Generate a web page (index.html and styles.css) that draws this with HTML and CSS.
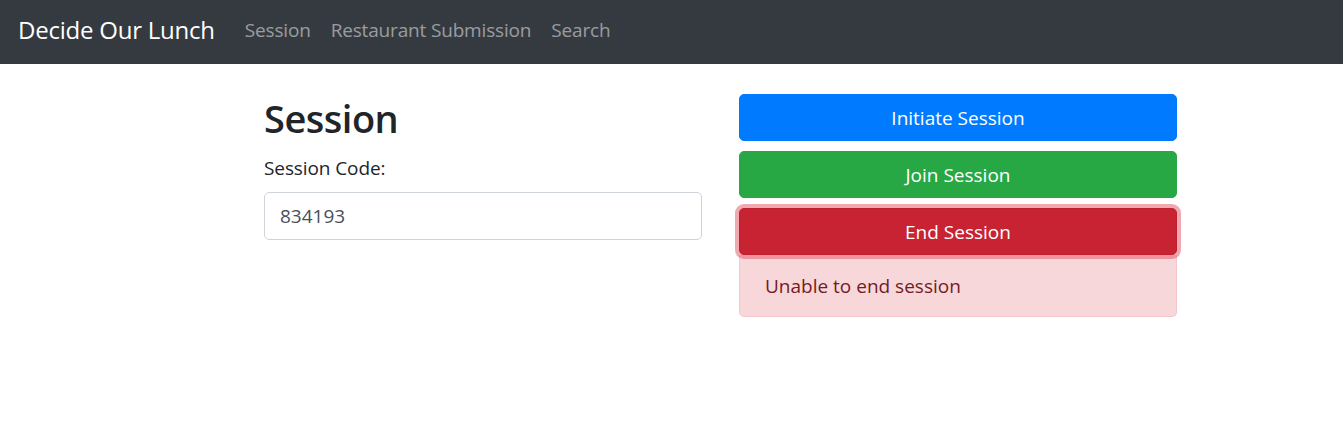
FILE: index.html
```html
<!DOCTYPE html>
<html>
<head>
<meta charset="utf-8">
<title>Decide Our Lunch</title>
<link rel="stylesheet" href="styles.css">
</head>
<body>
<nav class="navbar">
  <a class="brand" href="#">Decide Our Lunch</a>
  <ul class="nav">
    <li><a href="#">Session</a></li>
    <li><a href="#">Restaurant Submission</a></li>
    <li><a href="#">Search</a></li>
  </ul>
</nav>
<main class="container">
  <section class="col">
    <h1 class="title">Session</h1>
    <label class="label" for="code">Session Code:</label>
    <input class="input" id="code" type="text" value="834193">
  </section>
  <section class="col actions">
    <button class="btn btn-primary">Initiate Session</button>
    <button class="btn btn-success">Join Session</button>
    <button class="btn btn-danger focus">End Session</button>
    <div class="alert">Unable to end session</div>
  </section>
</main>
</body>
</html>
```
FILE: styles.css
```css
* { box-sizing: border-box; }
html, body { margin: 0; padding: 0; }
body {
  font-family: "Open Sans", "Noto Sans", "Liberation Sans", sans-serif;
  font-size: 20px;
  line-height: 1.5;
  color: #212529;
  background: #fff;
}
.navbar {
  height: 64px;
  background: #343a40;
  display: flex;
  align-items: center;
  padding: 0 18px 4px;
}
.brand {
  color: #fff;
  text-decoration: none;
  font-size: 24px;
  letter-spacing: -0.23px;
  margin-right: 30px;
  line-height: 30px;
}
.nav {
  list-style: none;
  margin: 0;
  padding: 0;
  display: flex;
  gap: 20px;
}
.nav a {
  color: rgba(255,255,255,.5);
  text-decoration: none;
  font-size: 19px;
  letter-spacing: -0.17px;
}
.container {
  margin-left: 264px;
  width: 913px;
  padding-top: 30px;
  display: grid;
  grid-template-columns: 438px 438px;
  column-gap: 37px;
}
.col { display: flex; flex-direction: column; }
.title {
  margin: 0 0 10px;
  font-size: 38px;
  line-height: 49px;
  font-weight: 600;
  letter-spacing: -0.5px;
}
.label {
  display: block;
  line-height: 30px;
  margin-bottom: 9px;
  font-size: 19px;
  letter-spacing: -0.1px;
}
.input {
  display: block;
  width: 100%;
  height: 48px;
  padding: 0 15px;
  font-family: inherit;
  font-size: 19px;
  color: #495057;
  border: 1px solid #ced4da;
  border-radius: 5px;
  background: #fff;
  letter-spacing: 0;
}
.btn {
  display: block;
  width: 100%;
  height: 47px;
  border: 1px solid transparent;
  border-radius: 5px;
  color: #fff;
  font-family: inherit;
  font-size: 19px;
  letter-spacing: 0;
  line-height: 30px;
  padding: 0;
  margin: 0 0 10px;
  cursor: pointer;
}
.btn-primary { background: #007bff; border-color: #007bff; }
.btn-success { background: #28a745; border-color: #28a745; }
.btn-danger { background: #c82333; border-color: #bd2130; margin-bottom: 0; position: relative; }
.btn-danger.focus { box-shadow: 0 0 0 4px rgba(225,83,97,.5); }
.alert {
  background: #f8d7da;
  border: 1px solid #f5c6cb;
  border-top: 0;
  color: #721c24;
  border-radius: 0 0 5px 5px;
  height: 62px;
  padding: 15px 25px;
  font-size: 19px;
  letter-spacing: 0;
  line-height: 32px;
}
```
